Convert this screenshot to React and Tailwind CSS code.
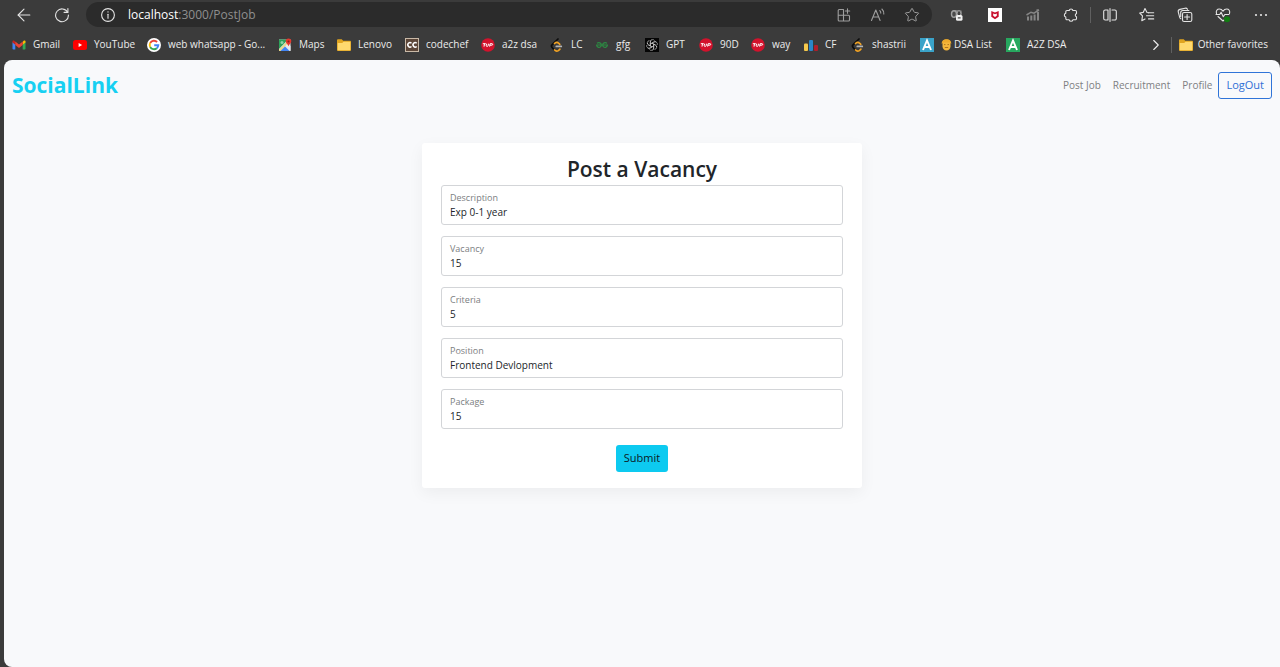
import { ArrowLeft, ChevronRight, Star } from "lucide-react";

const line = {
  fill: "none",
  stroke: "currentColor",
  strokeWidth: 1.1,
  strokeLinecap: "round",
  strokeLinejoin: "round",
};

/* ---------- toolbar icons ---------- */

function ReloadIcon() {
  return (
    <svg viewBox="0 0 16 16" className="size-4" {...line}>
      <path d="M13.6 5.2A6.4 6.4 0 1 0 14.4 8" />
      <path d="M13.9 1.6v3.8h-3.8" />
    </svg>
  );
}

function InfoIcon() {
  return (
    <svg viewBox="0 0 16 16" className="size-4" {...line}>
      <circle cx="8" cy="8" r="6.4" />
      <path d="M8 7.2v4" />
      <circle cx="8" cy="4.9" r="0.7" fill="currentColor" stroke="none" />
    </svg>
  );
}

function AppsIcon() {
  return (
    <svg viewBox="0 0 16 16" className="size-4" {...line}>
      <path d="M7.5 2.5H3.200a1 1 0 0 0-1 1v9.500a1 1 0 0 0 1 1h9.300a1 1 0 0 0 1-1V9.200a1 1 0 0 0-1-1H2.200M7.500 2.500V14" />
      <path d="M11.500 1.800v4.400M9.300 4h4.400" />
    </svg>
  );
}

function ReadAloudIcon() {
  return (
    <svg viewBox="0 0 16 16" className="size-4" {...line}>
      <path d="M1.500 13.500 5.800 3l4.300 10.500M3 10h5.600" />
      <path d="M9.800 3.600c.7.700 1 1.500 1 2.500M11.900 2c1.400 1.300 2 3 1.900 5" />
    </svg>
  );
}

function LockedExtensionIcon() {
  return (
    <svg viewBox="0 0 16 16" className="size-4">
      <path d="M4 3h7a2 2 0 0 1 2 2v5H7z" fill="#777" />
      <ellipse cx="5" cy="7" rx="2.500" ry="3.300" fill="#4a4a4a" stroke="#a0a0a0" strokeWidth="1.400" />
      <ellipse cx="10" cy="6.300" rx="1.800" ry="2.600" fill="#3f3f3f" stroke="#a0a0a0" strokeWidth="1" />
      <rect x="7" y="8" width="6.500" height="5.800" rx="1.600" fill="#f1f1f1" />
      <path d="M8.800 10h2.800v1.700H8.800z" fill="#777" />
    </svg>
  );
}

function ShieldExtensionIcon() {
  return (
    <svg viewBox="0 0 14 14" className="size-3.5">
      <path d="M0 0h14v14H0z" fill="#fff" />
      <path d="M3.300 3 7 4.600 10.700 3v5.800L7 11.300 3.300 8.800z" fill="#c8102e" />
      <path d="M5.200 5.500 7 6.300l1.800-.8v2.300L7 9 5.200 7.800z" fill="#fff" />
    </svg>
  );
}

function ChartExtensionIcon() {
  return (
    <svg viewBox="0 0 16 16" className="size-4" fill="#858585">
      <path d="M2 9.500h2v4H2zM5.300 8.500h2v5h-2zM8.600 7.500h2v6h-2zM12 5h2v8.500h-2z" />
      <path d="m1.500 8 4.500-2.800 3 1 5-3.200M11.500 3H14" fill="none" stroke="#858585" strokeWidth="1.500" />
    </svg>
  );
}

function PuzzleIcon() {
  return (
    <svg viewBox="0 0 16 16" className="size-4" {...line}>
      <path d="M4 3.500h2.200a1.900 1.900 0 0 1 3.700 0h2.400a1.200 1.200 0 0 1 1.200 1.200v1.900a1.600 1.600 0 0 0 0 3.100v1.900a1.200 1.200 0 0 1-1.200 1.200H9.900a1.900 1.900 0 0 1-3.700 0H4a1.200 1.200 0 0 1-1.200-1.200V10a1.900 1.900 0 0 1 0-3.700V4.700A1.200 1.200 0 0 1 4 3.500z" />
    </svg>
  );
}

function SplitIcon() {
  return (
    <svg viewBox="0 0 16 16" className="size-4" {...line}>
      <path d="M6 3H3.200a1.500 1.500 0 0 0-1.500 1.500v7A1.500 1.500 0 0 0 3.200 13H6zM10 3h2.800a1.500 1.500 0 0 1 1.500 1.500v7a1.500 1.500 0 0 1-1.500 1.500H10M8 1.500v13" />
    </svg>
  );
}

function FavoritesIcon() {
  return (
    <svg viewBox="0 0 16 16" className="size-4" {...line}>
      <path d="M9.800 5.700 8 5.500 6 1.600 4.200 5.400.7 6l2.800 2.900-.7 4.800 3.200-1.800" />
      <path d="M9.500 5.700h5.200M7.500 8.800h7.200M9.500 11.900h5.200" />
    </svg>
  );
}

function CollectionsIcon() {
  return (
    <svg viewBox="0 0 16 16" className="size-4" {...line}>
      <rect x="5.500" y="5.500" width="9.300" height="9" rx="1.600" />
      <path d="M10.100 7.500v5M7.600 10h5" />
      <path d="M3.800 11.700A2.400 2.400 0 0 1 2.700 10.300L1.300 5.200A2.300 2.300 0 0 1 2.900 2.400L8 1.200a2.300 2.300 0 0 1 2.500 1.100M3.700 9.500V5.700a2.200 2.200 0 0 1 2.200-2.200h6" />
    </svg>
  );
}

function EssentialsIcon() {
  return (
    <svg viewBox="0 0 16 16" className="size-4" {...line}>
      <path d="M1.500 6.500C.6 3.800 2.300 2 4.300 2 6 2 7.200 3 8 4.200 8.800 3 10 2 11.700 2c2 0 3.700 1.800 2.800 4.500" />
      <path d="M1 7.500h3.700l1.400-2.300 2.200 4.600 1.500-2.300H14M3 9.500l5 4.500 2-1.800" />
      <circle cx="12" cy="12.200" r="3" fill="#107c10" stroke="none" />
    </svg>
  );
}

function MoreIcon() {
  return (
    <svg viewBox="0 0 16 16" className="size-4" fill="currentColor">
      <circle cx="3" cy="8" r="1.100" />
      <circle cx="8" cy="8" r="1.100" />
      <circle cx="13" cy="8" r="1.100" />
    </svg>
  );
}

/* ---------- bookmark icons ---------- */

function GmailIcon() {
  return (
    <svg viewBox="0 0 14 14" className="size-3.5">
      <path d="M.5 4v6.700c0 .5.300.8.800.8h2V6.300z" fill="#4285f4" />
      <path d="M13.500 4v6.700c0 .5-.3.800-.8.800h-2V6.300z" fill="#34a853" />
      <path d="M.5 3.500v1l2.800 2.300V3.900L2.600 3C1.700 2.200.5 2.600.5 3.500z" fill="#c5221f" />
      <path d="M13.500 3.500v1l-2.800 2.300V3.900l.7-.9c.9-.8 2.100-.4 2.100.5z" fill="#fbbc04" />
      <path d="M3.300 3.500 7 6.400l3.700-2.900v3.600L7 10 3.300 7.100z" fill="#ea4335" />
    </svg>
  );
}

function YouTubeIcon() {
  return (
    <svg viewBox="0 0 14 14" className="size-3.5">
      <rect y="2" width="14" height="10" rx="2.500" fill="#f00" />
      <path d="M5.600 5v4l3.500-2z" fill="#fff" />
    </svg>
  );
}

function GoogleIcon() {
  return (
    <svg viewBox="0 0 14 14" className="size-3.5">
      <circle cx="7" cy="7" r="7" fill="#fff" />
      <g fill="none" strokeWidth="1.900">
        <path d="M3.200 5A4.300 4.300 0 0 1 10.100 4" stroke="#ea4335" />
        <path d="M3.200 5a4.300 4.300 0 0 0 0 4" stroke="#fbbc04" />
        <path d="M3.200 9a4.300 4.300 0 0 0 6.600 1.200" stroke="#34a853" />
        <path d="M9.800 10.200A4.300 4.300 0 0 0 11.300 7.200H7.200" stroke="#4285f4" />
      </g>
    </svg>
  );
}

function MapsIcon() {
  return (
    <svg viewBox="0 0 14 14" className="size-3.5">
      <path d="M1 1.500h11.500V13H1z" fill="#dfe3e6" />
      <path d="M1 1.500h9L1 11z" fill="#2da25a" />
      <path d="M1 11.500 10.500 2l1.500 1.500L2.500 13H1z" fill="#e9d98a" />
      <path d="M2.500 13 7 8.500l4.500 4.500z" fill="#4285f4" />
      <path d="M7.500 8 12.500 13V8L10 5z" fill="#e8eaed" />
      <circle cx="4" cy="4.500" r="1.500" fill="#8fd0a6" />
      <path d="M10.500.5a2.800 2.800 0 0 1 2.800 2.800c0 2-2.100 2.700-2.800 5-.7-2.300-2.800-3-2.800-5A2.800 2.800 0 0 1 10.500.5z" fill="#e5392e" />
      <circle cx="10.500" cy="3.400" r="1" fill="#8c1d18" />
    </svg>
  );
}

function FolderIcon() {
  return (
    <svg viewBox="0 0 14 14" className="size-3.5">
      <path d="M0 2.200c0-.5.400-.9.900-.9h3.800l1.500 1.500h6.900c.5 0 .9.400.9.900V12c0 .5-.4.900-.9.900H.9A.9.900 0 0 1 0 12z" fill="#e0a420" />
      <path d="M.7 5h4.500l1.300-1.300h6.800v8.500H.7z" fill="#ffd96f" />
    </svg>
  );
}

function CodechefIcon() {
  return (
    <svg viewBox="0 0 14 14" className="size-3.5">
      <rect x=".5" y=".5" width="13" height="13" fill="#5c4638" stroke="#c9b9a7" />
      <g fill="none" stroke="#fff" strokeWidth="1.500">
        <path d="M6.500 5.200a2.200 2.200 0 1 0 0 3.300M11.700 5.200a2.200 2.200 0 1 0 0 3.300" />
      </g>
    </svg>
  );
}

function TufIcon() {
  return (
    <svg viewBox="0 0 14 14" className="size-3.5">
      <circle cx="7" cy="7" r="6.800" fill="#d3122c" />
      <path d="M1.800 5.700h3M3.500 5.700 3 8.600M5.600 5.700l-.4 2.100c0 .8 1.700.8 1.900 0l.4-2.100M8.600 8.600l.5-2.900H11c1.200 0 .9 1.500-.2 1.500H9" fill="none" stroke="#fff" strokeWidth="1" />
    </svg>
  );
}

function LeetcodeIcon() {
  return (
    <svg viewBox="0 0 14 14" className="size-3.5" fill="none" strokeLinecap="round" strokeWidth="1.700">
      <path d="M8 1 2.200 6.600c-.9.900-.9 2.100 0 3l2.200 2.400" stroke="#0c0c0c" />
      <path d="M4.600 12c1.200 1.400 3.200 1.400 4.300.2l1-1M4.500 5.500c1.400-1.300 3.200-1.200 4.400 0l.9.800" stroke="#f2a324" />
      <path d="M6.300 8.400h5" stroke="#b5b5b5" />
    </svg>
  );
}

function GfgIcon() {
  return (
    <svg viewBox="0 0 14 14" className="size-3.5" fill="none" stroke="#2c8b43" strokeWidth="1.200">
      <path d="M2 5.200c2-1 4.300-.4 4.300 1.800S4.500 9.500 3.500 9.300 1.500 8 1.700 7H13M12 5.200c-2-1-4.300-.4-4.300 1.800s1.800 2.500 2.800 2.300 2-1.300 1.800-2.300" />
    </svg>
  );
}

function GptIcon() {
  return (
    <svg viewBox="0 0 14 14" className="size-3.5">
      <path d="M0 0h14v14H0z" fill="#050505" />
      <g fill="none" stroke="#dcdcdc" strokeWidth=".55">
        {[0, 60, 120, 180, 240, 300].map((angle) => (
          <path key={angle} transform={`rotate(${angle} 7 7)`} d="M5.400 7.900V4a2.300 2.300 0 0 1 4.200-1.400M5.400 5.900 8.900 3.900a2.300 2.300 0 0 1 2.300 0" />
        ))}
      </g>
    </svg>
  );
}

function BarsIcon() {
  return (
    <svg viewBox="0 0 14 14" className="size-3.5">
      <rect x="0" y="5.500" width="4" height="7.500" rx="1" fill="#f5c84c" />
      <rect x="5" y="2" width="4" height="11" rx="1" fill="#2a86c8" />
      <rect x="10" y="7" width="4" height="6" rx="1" fill="#b01e2b" />
    </svg>
  );
}

function LetterAIcon({ className }) {
  return (
    <svg viewBox="0 0 14 14" className={`size-3.5 ${className}`}>
      <path d="M3 12 7 2.500 11 12M4.500 9h5" fill="none" stroke="#fff" strokeWidth="1.900" />
    </svg>
  );
}

function FaceIcon() {
  return (
    <svg viewBox="0 0 11 12" className="h-3 w-[11px]">
      <path d="M1.500 4C1.500 1.500 3 .5 5.500.5s4 1 4 3.500v3.500c0 2.300-1.700 4-4 4s-4-1.700-4-4z" fill="#f5b73c" />
      <path d="M.8 5c-.3-3 1.500-4.700 4.700-4.700S10.500 2 10.200 5L8.700 3.500H2.300z" fill="#eeaa2c" />
      <path d="M3 5.600h1.500M6.500 5.600H8M3.800 8.500h3.400" stroke="#9a6214" strokeWidth=".8" />
    </svg>
  );
}

const bookmarks = [
  { label: "Gmail", icon: <GmailIcon />, width: "w-[61px]" },
  { label: "YouTube", icon: <YouTubeIcon />, width: "w-[74px]" },
  { label: "web whatsapp - Go...", icon: <GoogleIcon />, width: "w-[131px]" },
  { label: "Maps", icon: <MapsIcon />, width: "w-[59px]" },
  { label: "Lenovo", icon: <FolderIcon />, width: "w-[68px]" },
  { label: "codechef", icon: <CodechefIcon />, width: "w-[76px]" },
  { label: "a2z dsa", icon: <TufIcon />, width: "w-[69px]" },
  { label: "LC", icon: <LeetcodeIcon />, width: "w-[45px]" },
  { label: "gfg", icon: <GfgIcon />, width: "w-[50px]" },
  { label: "GPT", icon: <GptIcon />, width: "w-[54px]" },
  { label: "90D", icon: <TufIcon />, width: "w-[52px]" },
  { label: "way", icon: <TufIcon />, width: "w-[53px]" },
  { label: "CF", icon: <BarsIcon />, width: "w-[47px]" },
  { label: "shastrii", icon: <LeetcodeIcon />, width: "w-[69px]" },
  { label: "DSA List", icon: <LetterAIcon className="bg-[#3aa3c9]" />, face: true, width: "w-[86px]" },
  { label: "A2Z DSA", icon: <LetterAIcon className="bg-[#27a85f]" />, width: "w-[64px]" },
];

const tools = [
  { label: "Blocked extension", icon: <LockedExtensionIcon /> },
  { label: "Shield extension", icon: <ShieldExtensionIcon /> },
  { label: "Chart extension", icon: <ChartExtensionIcon /> },
  { label: "Extensions", icon: <PuzzleIcon /> },
  { label: "Split screen", icon: <SplitIcon />, divided: true },
  { label: "Favorites", icon: <FavoritesIcon /> },
  { label: "Collections", icon: <CollectionsIcon /> },
  { label: "Browser essentials", icon: <EssentialsIcon /> },
  { label: "Settings and more", icon: <MoreIcon /> },
];

const fields = [
  { id: "description", label: "Description", value: "Exp 0-1 year" },
  { id: "vacancy", label: "Vacancy", value: "15" },
  { id: "criteria", label: "Criteria", value: "5" },
  { id: "position", label: "Position", value: "Frontend Devlopment" },
  { id: "package", label: "Package", value: "15" },
];

function Toolbar() {
  return (
    <div className="flex h-[29px] items-center text-[#e4e4e4]">
      <button aria-label="Back" className="ml-4 flex w-4 justify-center">
        <ArrowLeft className="size-5 shrink-0" strokeWidth={1.3} />
      </button>
      <button aria-label="Refresh" className="ml-[22px]">
        <ReloadIcon />
      </button>
      <div className="ml-4 flex h-[25px] flex-1 items-center rounded-full bg-[#2b2b2b] pr-3 pl-3.5">
        <button aria-label="Site information">
          <InfoIcon />
        </button>
        <p className="ml-3 flex-1 text-[12px] leading-4 text-[#8f8f8f]">
          <span className="text-white">localhost</span>:3000/PostJob
        </p>
        <div className="flex items-center gap-[18px] text-[#9d9d9d]">
          <button aria-label="Install app">
            <AppsIcon />
          </button>
          <button aria-label="Read aloud">
            <ReadAloudIcon />
          </button>
          <button aria-label="Add to favorites">
            <Star className="size-4" strokeWidth={1.5} />
          </button>
        </div>
      </div>
      <div className="ml-1.5 flex">
        {tools.map((tool) => (
          <button
            key={tool.label}
            aria-label={tool.label}
            className={`flex h-4 w-[38px] items-center justify-center ${tool.divided ? "border-l border-[#606060]" : ""}`}
          >
            {tool.icon}
          </button>
        ))}
      </div>
    </div>
  );
}

function BookmarksBar() {
  return (
    <div className="flex h-[31px] items-center px-3 text-[10px] text-[#ececec]">
      {bookmarks.map((item) => (
        <a key={item.label} href="#" className={`flex shrink-0 items-center gap-[7px] whitespace-nowrap ${item.width}`}>
          <span className="shrink-0">{item.icon}</span>
          <span className="flex items-center gap-0.5">
            {item.face && <FaceIcon />}
            {item.label}
          </span>
        </a>
      ))}
      <button aria-label="More bookmarks" className="ml-auto">
        <ChevronRight className="size-[18px]" strokeWidth={1.5} />
      </button>
      <a href="#" className="ml-1.5 flex h-4 items-center gap-[5px] border-l border-[#606060] pl-[7px] whitespace-nowrap">
        <FolderIcon />
        Other favorites
      </a>
    </div>
  );
}

function Navbar() {
  return (
    <header className="flex items-center justify-between pt-[11px] pr-2 pl-2">
      <a href="#" className="text-[21px] leading-7 font-bold text-[#17d0f2]">
        SocialLink
      </a>
      <nav className="flex items-center text-[10px] leading-4 text-[#7d7f82]">
        <a href="#" className="mr-3">Post Job</a>
        <a href="#" className="mr-3">Recruitment</a>
        <a href="#" className="mr-1.5">Profile</a>
        <button className="h-[27px] rounded-[3px] border border-[#2f74d8] px-[7px] text-[11px] text-[#2f6fd6]">LogOut</button>
      </nav>
    </header>
  );
}

function VacancyForm() {
  return (
    <form
      onSubmit={(event) => event.preventDefault()}
      className="mx-auto mt-11 w-full max-w-[440px] rounded-[3px] bg-white px-[19px] pt-2.5 pb-4 shadow-[0_5px_16px_rgba(0,0,0,0.05)]"
    >
      <h1 className="text-center text-[21px] leading-8 font-semibold text-[#212529]">Post a Vacancy</h1>
      <div className="flex flex-col gap-[11px]">
        {fields.map((field) => (
          <div key={field.id} className="flex h-10 flex-col rounded-[3px] border border-[#d3d5d8] px-2 pt-[5px]">
            <label htmlFor={field.id} className="text-[9px] leading-[14px] text-[#7b7e81]">
              {field.label}
            </label>
            <input
              id={field.id}
              type="text"
              defaultValue={field.value}
              className="h-3.5 w-full bg-transparent text-[10px] leading-[14px] text-[#212529] outline-none"
            />
          </div>
        ))}
      </div>
      <div className="mt-4 flex justify-center">
        <button type="submit" className="h-[27px] rounded-[3px] bg-[#0dcaf0] px-2 text-[11px] text-[#0b1a1f]">
          Submit
        </button>
      </div>
    </form>
  );
}

export default function App() {
  return (
    <div className="flex min-h-screen flex-col bg-[#3b3b3b] font-['Open_Sans','Noto_Sans',sans-serif]">
      <Toolbar />
      <BookmarksBar />
      <main className="ml-1 flex-1 rounded-l-lg rounded-tr-lg bg-[#f8f9fb] pb-8">
        <Navbar />
        <VacancyForm />
      </main>
    </div>
  );
}
